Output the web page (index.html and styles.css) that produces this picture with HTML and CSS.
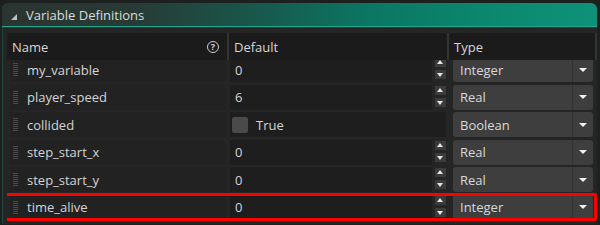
FILE: index.html
```html
<!DOCTYPE html>
<html>
<head>
<meta charset="utf-8">
<link rel="stylesheet" href="styles.css">
</head>
<body>
<div class="panel">
  <div class="titlebar">
    <svg class="collapse" width="6" height="6" viewBox="0 0 6 6"><polygon points="6,0 6,6 0,6" fill="#b9c2bf"/></svg>
    <span class="title">Variable Definitions</span>
  </div>
  <div class="body">
    <div class="thead">
      <div class="th th-name"><span>Name</span><span class="help">?</span></div>
      <div class="th th-def">Default</div>
      <div class="th th-type">Type</div>
    </div>
    <div class="rows">
      <div class="rows-inner">
        <div class="row">
          <div class="name-cell"><span class="grip"></span><span class="name">my_variable</span></div>
          <div class="def-cell">0</div>
          <div class="spinner"><span class="spin up"></span><span class="spin down"></span></div>
          <div class="dropdown"><span class="dd-text">Integer</span><span class="dd-arrow"></span></div>
        </div>
        <div class="row">
          <div class="name-cell"><span class="grip"></span><span class="name">player_speed</span></div>
          <div class="def-cell">6</div>
          <div class="spinner"><span class="spin up"></span><span class="spin down"></span></div>
          <div class="dropdown"><span class="dd-text">Real</span><span class="dd-arrow"></span></div>
        </div>
        <div class="row">
          <div class="name-cell"><span class="grip"></span><span class="name">collided</span></div>
          <div class="def-cell bool"><span class="check"></span><span>True</span></div>
          <div class="dropdown"><span class="dd-text">Boolean</span><span class="dd-arrow"></span></div>
        </div>
        <div class="row">
          <div class="name-cell"><span class="grip"></span><span class="name">step_start_x</span></div>
          <div class="def-cell">0</div>
          <div class="spinner"><span class="spin up"></span><span class="spin down"></span></div>
          <div class="dropdown"><span class="dd-text">Real</span><span class="dd-arrow"></span></div>
        </div>
        <div class="row">
          <div class="name-cell"><span class="grip"></span><span class="name">step_start_y</span></div>
          <div class="def-cell">0</div>
          <div class="spinner"><span class="spin up"></span><span class="spin down"></span></div>
          <div class="dropdown"><span class="dd-text">Real</span><span class="dd-arrow"></span></div>
        </div>
        <div class="row hl">
          <div class="name-cell"><span class="grip"></span><span class="name">time_alive</span></div>
          <div class="def-cell">0</div>
          <div class="spinner"><span class="spin up"></span><span class="spin down"></span></div>
          <div class="dropdown"><span class="dd-text">Integer</span><span class="dd-arrow"></span></div>
        </div>
      </div>
    </div>
  </div>
</div>
</body>
</html>
```
FILE: styles.css
```css
html, body {
  margin: 0;
  padding: 0;
}
body {
  width: 600px;
  height: 225px;
  overflow: hidden;
  background: #1c2120;
  font-family: "Open Sans", "Noto Sans", sans-serif;
  font-size: 13px;
  color: #d4d4d4;
}
.panel {
  margin: 3px 3px 0 2px;
}
.titlebar {
  height: 24px;
  border-radius: 6px 6px 0 0;
  background: linear-gradient(to right, #2b3431 0%, #283a35 22%, #165c4e 45%, #0b7763 62%, #0c8a71 85%, #0e9179 100%);
  box-shadow: inset 0 -1px 0 #23a68a;
  display: flex;
  align-items: center;
  padding-left: 9px;
  box-sizing: border-box;
}
.collapse {
  margin-top: 3px;
}
.title {
  margin-left: 9px;
  color: #d8dcdb;
}
.body {
  border-left: 1px solid #22463d;
  border-top: 1px solid #1e4038;
  background: #252525;
  padding: 5px 0 0 4px;
  height: 197px;
  box-sizing: border-box;
}
.thead {
  display: flex;
  height: 27px;
  background: #1b1b1b;
}
.th {
  display: flex;
  align-items: center;
  box-sizing: border-box;
  border-right: 2px solid #343434;
  color: #d6d6d6;
}
.th-name {
  width: 222px;
  padding-left: 5px;
  justify-content: space-between;
  padding-right: 8px;
}
.th-def {
  width: 220px;
  padding-left: 5px;
}
.th-type {
  width: 148px;
  padding-left: 5px;
}
.help {
  width: 10px;
  height: 10px;
  border: 1.5px solid #cfcfcf;
  border-radius: 50%;
  font-size: 9px;
  font-weight: bold;
  line-height: 10px;
  text-align: center;
  color: #d8d8d8;
}
.rows {
  height: 165px;
  overflow: hidden;
}
.rows-inner {
  margin-top: -3px;
}
.row {
  display: flex;
  align-items: flex-start;
  height: 27.5px;
  padding-left: 3px;
}
.row.hl {
  position: relative;
}
.row.hl::after {
  content: "";
  position: absolute;
  left: -4px;
  right: 0;
  top: -1.5px;
  height: 28px;
  border: 3px solid #ff0000;
  border-radius: 2px;
  box-sizing: border-box;
}
.name-cell {
  width: 216px;
  height: 25px;
  background: #222222;
  display: flex;
  align-items: center;
}
.grip {
  margin-left: 3px;
  width: 5px;
  height: 13px;
  background: repeating-linear-gradient(to bottom, #4a4a4a 0 1px, transparent 1px 2px);
}
.name {
  margin-left: 9px;
}
.def-cell {
  margin-left: 4px;
  width: 202px;
  height: 25px;
  background: #1e1e1e;
  display: flex;
  align-items: center;
  padding-left: 5px;
  box-sizing: border-box;
}
.def-cell.bool {
  width: 216px;
  padding-left: 2px;
}
.check {
  width: 16px;
  height: 16px;
  background: #4a4a4a;
  border-radius: 2px;
  margin-right: 8px;
}
.spinner {
  margin-left: 3px;
  width: 11px;
  display: flex;
  flex-direction: column;
  gap: 3px;
  padding-top: 1px;
}
.spin {
  height: 9px;
  background: #3b3b3b;
  position: relative;
}
.spin::after {
  content: "";
  position: absolute;
  left: 2px;
  top: 2px;
  border-left: 3.5px solid transparent;
  border-right: 3.5px solid transparent;
}
.spin.up::after {
  border-bottom: 4px solid #e6e6e6;
}
.spin.down::after {
  border-top: 4px solid #e6e6e6;
  top: 3px;
}
.dropdown {
  margin-left: 7px;
  width: 140px;
  height: 25px;
  background: #3e3e3e;
  border-radius: 3px;
  display: flex;
  align-items: center;
}
.def-cell.bool + .dropdown {
  margin-left: 7px;
}
.dd-text {
  flex: 1;
  padding-left: 7px;
  color: #d8d8d8;
}
.dd-arrow {
  width: 20px;
  height: 25px;
  border-left: 1px solid #333333;
  display: flex;
  align-items: center;
  justify-content: center;
}
.dd-arrow::after {
  content: "";
  border-left: 4px solid transparent;
  border-right: 4px solid transparent;
  border-top: 4px solid #f0f0f0;
}
```
